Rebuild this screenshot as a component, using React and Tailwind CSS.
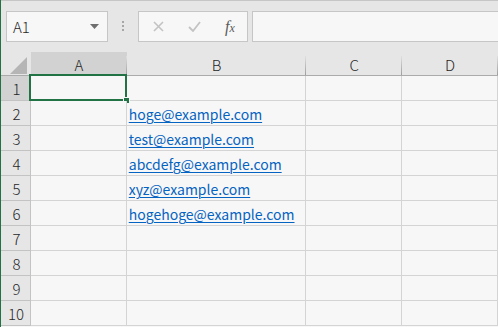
import React from "react";

const font = { fontFamily: '"Noto Sans CJK JP", "Noto Sans", sans-serif' };

const columns = [
  { key: "A", width: "w-[96px]" },
  { key: "B", width: "w-[180px]" },
  { key: "C", width: "w-[96px]" },
  { key: "D", width: "w-[96px]" },
];

const emails = [
  "",
  "hoge@example.com",
  "test@example.com",
  "abcdefg@example.com",
  "xyz@example.com",
  "hogehoge@example.com",
  "",
  "",
  "",
  "",
];

const Toolbar = () => (
  <div className="flex h-[52px] items-start border-t border-[#c6c6c6] bg-[#e6e6e6] pt-[10px]">
    {/* name box */}
    <div className="ml-[5px] flex h-[31px] w-[102px] items-center justify-between border border-[#c6c6c6] bg-[#f7f7f7] pl-[6px] pr-[8px]">
      <span className="text-[15px] font-light leading-none text-[#262626]">A1</span>
      <svg width="9" height="5" viewBox="0 0 9 5">
        <path d="M0 0 L9 0 L4.5 5 Z" fill="#6e6e6e" />
      </svg>
    </div>
    {/* dots */}
    <div className="flex w-[30px] flex-col items-center gap-[2px] pt-[10px]">
      <span className="h-[2px] w-[2px] bg-[#a6a6a6]" />
      <span className="h-[2px] w-[2px] bg-[#a6a6a6]" />
      <span className="h-[2px] w-[2px] bg-[#a6a6a6]" />
    </div>
    {/* cancel / enter / fx */}
    <div className="flex h-[31px] w-[110px] items-center border border-[#c6c6c6] bg-[#f7f7f7]">
      <div className="flex w-[37px] justify-center pl-[2px]">
        <svg width="11" height="11" viewBox="0 0 11 11">
          <path d="M1 1 L10 10 M10 1 L1 10" stroke="#c3c3c3" strokeWidth="1.6" />
        </svg>
      </div>
      <div className="flex w-[37px] justify-center">
        <svg width="13" height="11" viewBox="0 0 13 11">
          <path d="M1 6 L5 10 L12 1" stroke="#c3c3c3" strokeWidth="1.8" fill="none" />
        </svg>
      </div>
      <div className="flex w-[34px] justify-center">
        <span className="font-['Liberation_Serif'] text-[16px] italic leading-none text-[#5a5a5a]">
          f<span className="text-[12px]">x</span>
        </span>
      </div>
    </div>
    {/* formula input */}
    <div className="ml-[4px] h-[31px] flex-1 border border-r-0 border-[#c6c6c6] bg-[#f7f7f7]" />
  </div>
);

const HeaderRow = () => (
  <div className="flex h-[24px] bg-[#e6e6e6]">
    <div className="relative w-[30px] border-b border-[#ababab]">
      <svg
        className="absolute left-[9px] top-[5px]"
        width="17"
        height="17"
        viewBox="0 0 17 17"
      >
        <path d="M17 0 L17 17 L0 17 Z" fill="#b5b5b5" />
      </svg>
    </div>
    {columns.map((c, i) => (
      <div
        key={c.key}
        className={`relative flex ${c.width} items-center justify-center border-b text-[15px] font-light leading-none text-[#262626] ${
          i === 0 ? "border-[#ababab] bg-[#d2d2d2]" : "border-[#ababab]"
        }`}
      >
        <span className="pt-[2px]">{c.key}</span>
        <span className="absolute bottom-0 right-0 top-[4px] w-px bg-gradient-to-b from-[#e0e0e0] to-[#9e9e9e]" />
      </div>
    ))}
  </div>
);

const Row = ({ n, email }) => (
  <div className="flex h-[25px]">
    <div
      className={`flex w-[30px] items-center justify-center border-b border-r border-[#c3c3c3] text-[15px] font-light leading-none text-[#262626] ${
        n === 1 ? "bg-[#d2d2d2]" : "bg-[#e6e6e6]"
      }`}
    >
      <span className={n === 10 ? "pl-[1px]" : "pl-[2px]"}>{n}</span>
    </div>
    <div className="relative z-10 w-[96px] border-b border-r border-[#d4d4d4] bg-[#f7f7f7]">
      {n === 1 && (
        <>
          <div className="absolute -left-[2px] -top-[2px] h-[27px] w-[98px] border-2 border-[#217346]" />
          <div className="absolute -bottom-[4px] -right-[4px] h-[7px] w-[7px] border border-[#f7f7f7] bg-[#217346]" />
        </>
      )}
    </div>
    <div className="flex w-[180px] items-end border-b border-r border-[#d4d4d4] bg-[#f7f7f7] pb-[1px] pl-[2px]">
      {email && (
        <span className="text-[14px] leading-[20px] text-[#0563c1] underline decoration-1 underline-offset-[2px]">
          {email}
        </span>
      )}
    </div>
    <div className="w-[96px] border-b border-r border-[#d4d4d4] bg-[#f7f7f7]" />
    <div className="w-[96px] border-b border-r border-[#d4d4d4] bg-[#f7f7f7]" />
  </div>
);

export default function App() {
  return (
    <div
      className="h-[327px] w-[498px] overflow-hidden border-l border-[#217346] bg-[#f7f7f7]"
      style={font}
    >
      <Toolbar />
      <HeaderRow />
      {emails.map((email, i) => (
        <Row key={i} n={i + 1} email={email} />
      ))}
    </div>
  );
}
